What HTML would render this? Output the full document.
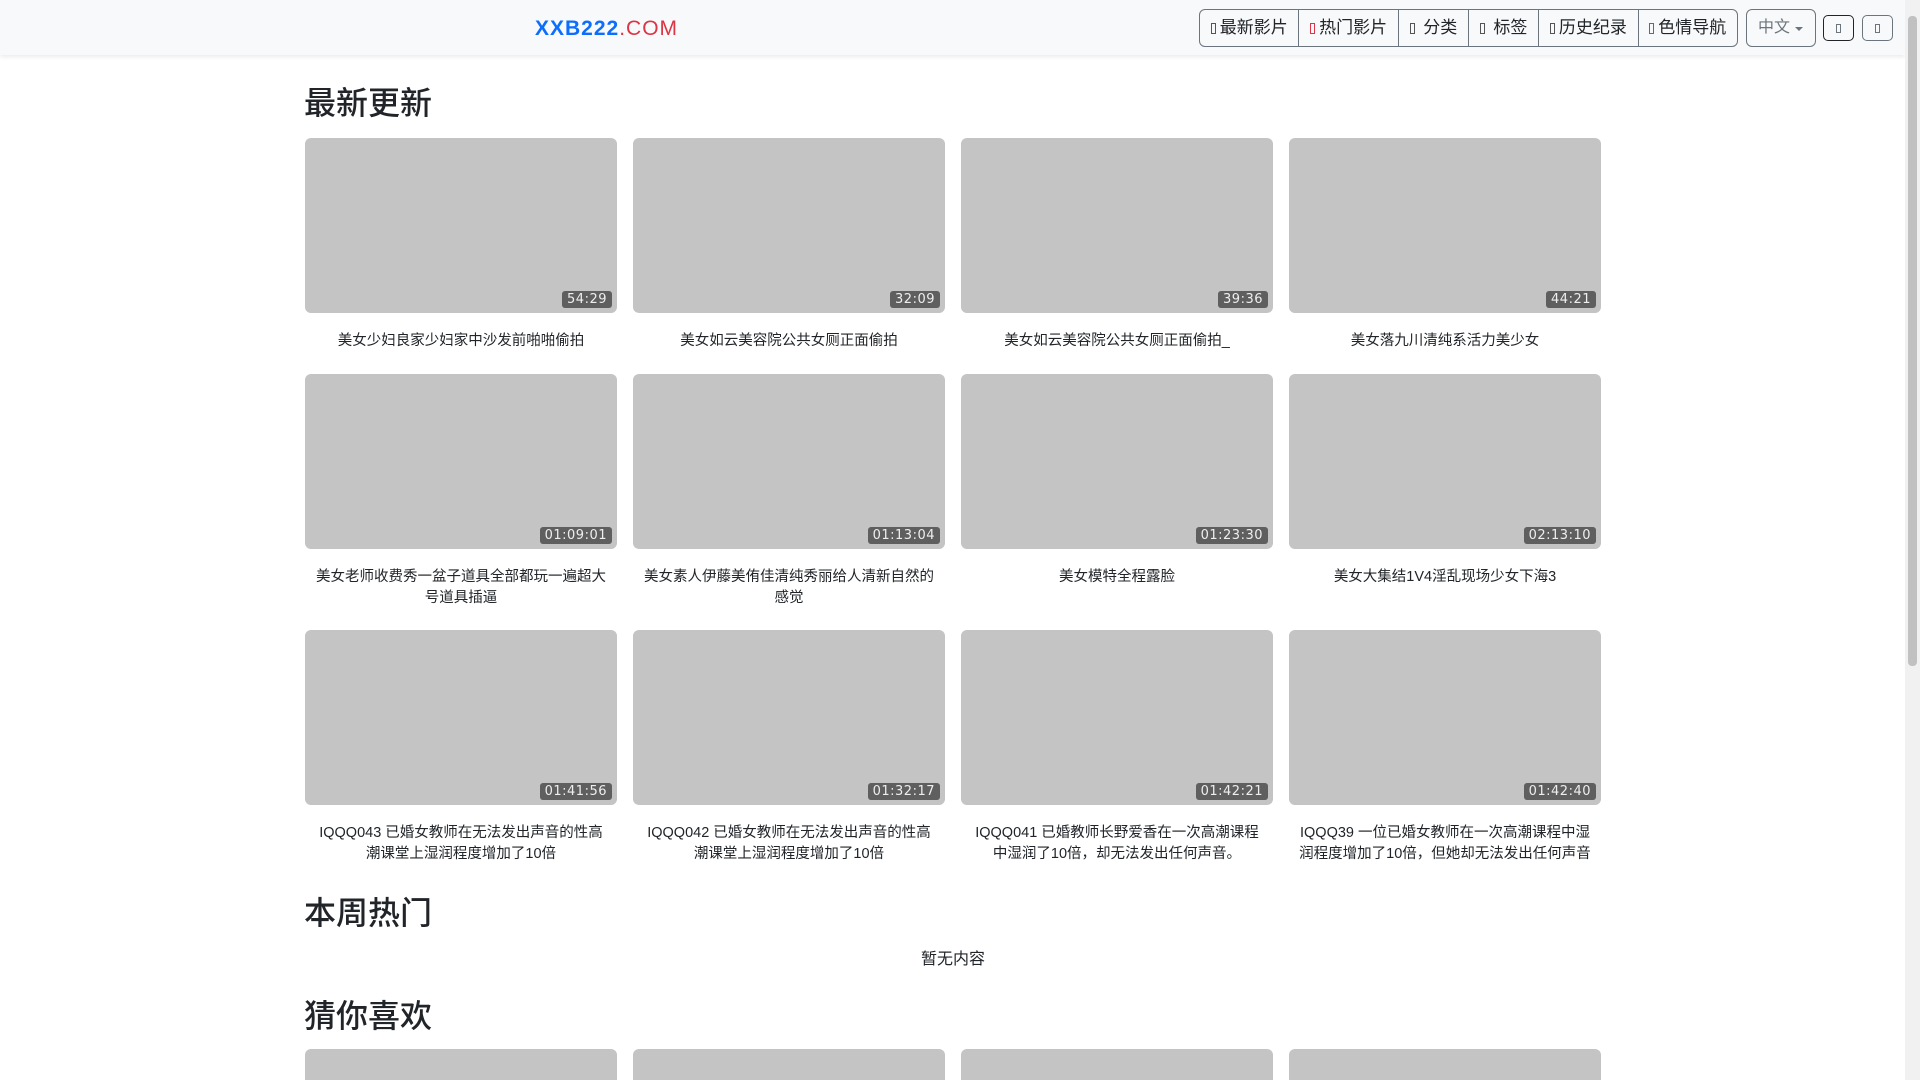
<!DOCTYPE html>
<html><head><meta charset="utf-8"><style>
*{box-sizing:border-box;margin:0;padding:0}
html,body{width:1920px;height:1080px;overflow:hidden}
body{background:#fff;font-family:"Liberation Sans","Noto Sans CJK SC",sans-serif;color:#212529;position:relative}
.hdr{position:absolute;left:0;top:0;width:1905px;height:55px;background:#f8f9fa;box-shadow:0 2px 4px rgba(0,0,0,.08)}
.logo{position:absolute;left:535px;top:17px;font-size:21px;font-weight:bold;letter-spacing:1px}
.logo b{color:#0d6efd}.logo span{color:#dc3545;font-weight:normal}
.grp{position:absolute;left:1199px;top:9px;height:38px;width:539px;display:flex;border:1px solid #6c757d;border-radius:6px;overflow:hidden}
.grp div{flex:auto;text-align:center;line-height:36px;font-size:17px;border-left:1px solid #6c757d;white-space:nowrap}
.grp div:first-child{border-left:none}
.ic{display:inline-block;width:5px;height:11px;border:1px solid #555;margin-right:4px;vertical-align:-1px}
.r{border-color:#dc3545}
.lang{position:absolute;left:1746px;top:9px;width:70px;height:38px;border:1px solid #6c757d;border-radius:6px;font-size:16px;line-height:36px;color:#6c757d;padding-left:11px}
.lang:after{content:"";position:absolute;right:12px;top:17px;border:4px solid transparent;border-top-color:#6c757d}
.sb{position:absolute;top:15px;width:31px;height:26px;border:1px solid #6c757d;border-radius:5px}
.sb i{position:absolute;left:12px;top:8px;width:5px;height:9px;border:1px solid #6c757d}
.scroll{position:absolute;left:1905px;top:0;width:15px;height:1080px;background:#f1f1f1}
.scroll div{position:absolute;left:3px;top:16px;width:9px;height:650px;background:#c1c1c1;border-radius:4px}
h2{position:absolute;left:304px;font-size:32px;font-weight:500;line-height:40px}
.grid{position:absolute;left:305px;width:1296px;display:grid;grid-template-columns:repeat(4,312px);column-gap:16px}
.card{position:relative}
.th{height:175px;background:#c4c4c4;border-radius:6px;position:relative}
.du{position:absolute;right:5px;bottom:5px;background:#5f5f5f;color:#eee;font-family:"DejaVu Sans",sans-serif;font-size:13px;line-height:17px;padding:0 5px;border-radius:3px;letter-spacing:.5px}
.t{margin-top:18px;text-align:center;font-size:14.5px;line-height:21px;padding:0 6px}
</style></head><body>
<div class="hdr">
<div class="logo"><b>XXB222</b><span>.COM</span></div>
<div class="grp"><div><i class="ic"></i>最新影片</div><div><i class="ic r"></i>热门影片</div><div><i class="ic"></i> 分类</div><div><i class="ic"></i> 标签</div><div><i class="ic"></i>历史纪录</div><div><i class="ic r"></i>色情导航</div></div>
<div class="lang">中文</div>
<div class="sb" style="left:1823px;border-color:#212529"><i></i></div>
<div class="sb" style="left:1862px"><i></i></div>
</div>
<div class="scroll"><div></div></div>
<h2 style="top:83px">最新更新</h2>
<div class="grid" style="top:138px">
<div class="card"><div class="th"><span class="du">54:29</span></div><div class="t">美女少妇良家少妇家中沙发前啪啪偷拍</div></div>
<div class="card"><div class="th"><span class="du">32:09</span></div><div class="t">美女如云美容院公共女厕正面偷拍</div></div>
<div class="card"><div class="th"><span class="du">39:36</span></div><div class="t">美女如云美容院公共女厕正面偷拍_</div></div>
<div class="card"><div class="th"><span class="du">44:21</span></div><div class="t">美女落九川清纯系活力美少女</div></div>
</div>
<div class="grid" style="top:374px">
<div class="card"><div class="th"><span class="du">01:09:01</span></div><div class="t">美女老师收费秀一盆子道具全部都玩一遍超大<br>号道具插逼</div></div>
<div class="card"><div class="th"><span class="du">01:13:04</span></div><div class="t">美女素人伊藤美侑佳清纯秀丽给人清新自然的<br>感觉</div></div>
<div class="card"><div class="th"><span class="du">01:23:30</span></div><div class="t">美女模特全程露脸</div></div>
<div class="card"><div class="th"><span class="du">02:13:10</span></div><div class="t">美女大集结1V4淫乱现场少女下海3</div></div>
</div>
<div class="grid" style="top:630px">
<div class="card"><div class="th"><span class="du">01:41:56</span></div><div class="t">IQQQ043 已婚女教师在无法发出声音的性高<br>潮课堂上湿润程度增加了10倍</div></div>
<div class="card"><div class="th"><span class="du">01:32:17</span></div><div class="t">IQQQ042 已婚女教师在无法发出声音的性高<br>潮课堂上湿润程度增加了10倍</div></div>
<div class="card"><div class="th"><span class="du">01:42:21</span></div><div class="t">IQQQ041 已婚教师长野爱香在一次高潮课程<br>中湿润了10倍，却无法发出任何声音。</div></div>
<div class="card"><div class="th"><span class="du">01:42:40</span></div><div class="t">IQQQ39 一位已婚女教师在一次高潮课程中湿<br>润程度增加了10倍，但她却无法发出任何声音</div></div>
</div>
<h2 style="top:893px">本周热门</h2>
<div style="position:absolute;left:305px;width:1296px;top:949px;text-align:center;font-size:16px;line-height:22px">暂无内容</div>
<h2 style="top:996px">猜你喜欢</h2>
<div class="grid" style="top:1049px;height:31px;overflow:hidden">
<div class="card"><div class="th"></div></div><div class="card"><div class="th"></div></div><div class="card"><div class="th"></div></div><div class="card"><div class="th"></div></div>
</div>
</body></html>
